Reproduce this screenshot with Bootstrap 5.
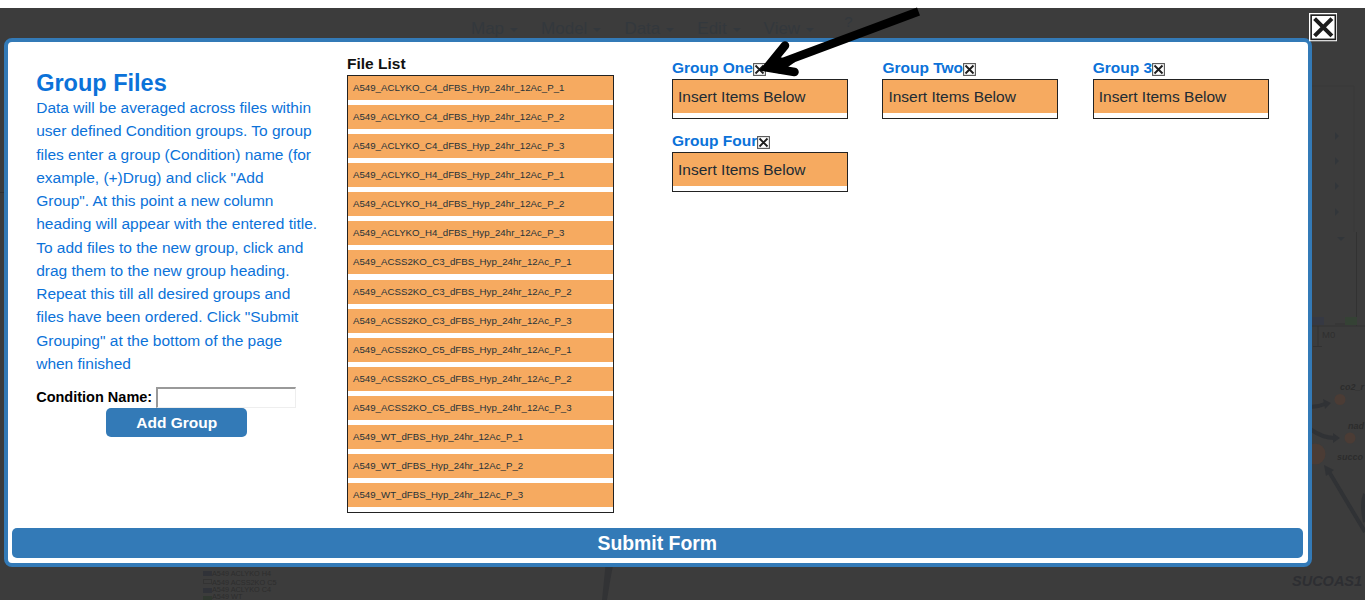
<!DOCTYPE html>
<html lang="en">
<head>
<meta charset="utf-8">
<title>Group Files</title>
<meta name="viewport" content="width=device-width, initial-scale=1">
<link href="https://cdn.jsdelivr.net/npm/bootstrap@5.3.0/dist/css/bootstrap.min.css" rel="stylesheet">
<style>
body{font-family:"Liberation Sans",Arial,sans-serif;font-size:15.5px;line-height:23.27px;background:#fff;color:#212529;padding-top:8px;height:600px;overflow:hidden}
.backdrop-page{width:1365px;height:592px;background:#3c3c3c}
.map-bg{left:0;top:-8px;width:1365px;height:600px}
.top-menu{height:30px;padding-left:471px;font-size:17px;line-height:20px;color:#33383d}
.top-menu span.item{margin-right:23px;margin-top:11px;height:19px;display:flex;align-items:center}
.top-menu .item::after{content:"";border:4px solid transparent;border-top-color:#33383d;border-bottom:0;margin-left:6px;margin-top:3px}
.top-menu .help{font-size:15px;line-height:28px;margin-left:7px}
.dialog-box{margin-left:3.5px;width:1308.5px;height:529px;border:4px solid #337ab7;border-radius:8px;background:#fff}
.dialog-body{height:486px}
.intro{width:339.5px;padding:29px 0 0 28.7px;color:#0b72d9}
.intro h1{font-size:23.5px;line-height:25px;font-weight:700;margin:0}
.intro p{margin:0;white-space:nowrap}
.cond{margin-top:10.5px;color:#000;font-size:14.5px;font-weight:700;height:22.5px}
.cond input{width:140px;height:21px;border:1px solid #eee;border-top:2px solid #999;border-left:2px solid #999;border-radius:0;margin:1px 0 0 4px;padding:0;background:#fff}
.blue-btn{background:#337ab7;color:#fff;font-weight:700;border:0;border-radius:5px;padding:0}
.add-btn{width:141px;height:28.5px;margin-left:70px;font-size:15.5px;line-height:29px}
.files{width:267px;padding-top:10px}
.files h2,.group-name{font-size:15.5px;line-height:23px;font-weight:700;margin:0}
.files h2{color:#111}
.drop-box{border:1px solid #222;background:#fff}
.file-item{height:24px;margin-bottom:5.09px;padding-left:5px;background:#f6aa60;font-size:9.7px;line-height:24px;color:#263238}
.files .drop-box{height:438px}
.groups{margin-left:58px;padding-top:14.4px;width:634px;align-content:flex-start}
.group-col{width:210.4px;height:72.7px}
.group-name{color:#0b72d9;height:23px}
.group-name svg{margin-top:3px}
.group-col .drop-box{width:176px;height:40px}
.insert-item{height:33px;padding-left:5px;background:#f6aa60;line-height:33px;color:#212b33}
.submit-btn{width:1291.5px;height:30px;margin-left:4px;font-size:19.4px;line-height:30px}
.close-x{left:1308.5px;top:5px}
.pointer{left:750px;top:-8px}
</style>
</head>
<body>
<svg class="d-none"><symbol id="xbox" viewBox="0 0 28 28"><rect width="28" height="28" fill="#fff"/><rect x="2.1" y="2.1" width="23.8" height="23.8" fill="#fff" stroke="#1d1d1d" stroke-width="1.6"/><path d="M5.500 5.500 22.500 22.500M22.500 5.500 5.500 22.500" stroke="#1d1d1d" stroke-width="4"/></symbol>
<symbol id="xsmall" viewBox="0 0 13 13"><rect x=".6" y=".6" width="11.8" height="11.8" fill="#fff" stroke="#555" stroke-width="1.1"/><path d="M2.500 2.500 10.500 10.500M10.500 2.500 2.500 10.500" stroke="#1d1d1d" stroke-width="1.9"/></symbol></svg>
<div class="backdrop-page position-relative">
<svg class="map-bg position-absolute" viewBox="0 0 1365 600" font-family="Liberation Sans">
<g fill="#32363a"><path d="M1335 132l4 4-4 4zM1335 157l4 4-4 4zM1335 182l4 4-4 4zM1335 208l4 4-4 4zM1337 237h8l-4 4z"/></g>
<path d="M1312 86h42v146" fill="none" stroke="#393939"/>
<path d="M1356.500 232v94M1312 326h53M1318 326v20M1313 346.500h9M1335 324h10" fill="none" stroke="#323232"/>
<rect x="1312" y="317" width="12" height="8" fill="#363943"/><rect x="1345" y="317" width="12" height="8" fill="#354235"/>
<text x="1322" y="338" font-size="9.500" fill="#2f2f2f">M0</text>
<g fill="#4b3c35"><circle cx="1340" cy="399.500" r="5.500"/><circle cx="1350" cy="438" r="5.500"/><circle cx="1315" cy="454" r="10.500"/></g>
<g fill="none" stroke="#303235" stroke-width="4"><path d="M1310 407q8 0 15-3M1310 429q13 9 24 9M1328 470 1365 532"/><path d="M1365 494q-4 10 0 28"/></g>
<path d="M1323 399l8 4-6 6zM1333 433l7 5-7 5zM1324 465l10 5-8 6z" fill="#303235"/>
<path d="M606 560h8q-4 20-7 40h-5z" fill="#323335"/>
<g fill="#2c2c2c" font-weight="700" font-style="italic" font-size="9"><text x="1340" y="390">co2_r</text><text x="1348" y="429">nad</text><text x="1337" y="460">succo</text></g>
<text x="1292" y="586" font-size="14.500" font-weight="700" font-style="italic" fill="#2d2e32">SUCOAS1</text>
<g font-size="7.300" fill="#2d2d2d"><text x="212" y="576">A549 ACLYKO H4</text><text x="212" y="584.500">A549 ACSS2KO C5</text><text x="212" y="592">A549 ACLYKO C4</text><text x="212" y="599">A549 WT</text></g>
<g fill="#303238"><rect x="203" y="571" width="9" height="5"/><rect x="203" y="588" width="9" height="5"/><rect x="203" y="596" width="9" height="4" fill="#303830"/></g><rect x="203.500" y="579.500" width="8" height="4" fill="none" stroke="#333"/>
<path d="M0 192.500h4" stroke="#303030"/>
</svg>
<nav class="top-menu d-flex">
<span class="item">Map</span><span class="item">Model</span><span class="item">Data</span><span class="item">Edit</span><span class="item">View</span><span class="help">?</span>
</nav>
<main class="dialog-box position-relative">
<div class="dialog-body d-flex">
<section class="intro flex-shrink-0">
<h1>Group Files</h1>
<p>Data will be averaged across files within<br>user defined Condition groups. To group<br>files enter a group (Condition) name (for<br>example, (+)Drug) and click "Add<br>Group". At this point a new column<br>heading will appear with the entered title.<br>To add files to the new group, click and<br>drag them to the new group heading.<br>Repeat this till all desired groups and<br>files have been ordered. Click "Submit<br>Grouping" at the bottom of the page<br>when finished</p>
<div class="cond d-flex"><label for="cname">Condition Name:</label><input id="cname" type="text"></div>
<button class="blue-btn add-btn d-block">Add Group</button>
</section>
<section class="files flex-shrink-0">
<h2>File List</h2>
<div class="drop-box">
<div class="file-item">A549_ACLYKO_C4_dFBS_Hyp_24hr_12Ac_P_1</div>
<div class="file-item">A549_ACLYKO_C4_dFBS_Hyp_24hr_12Ac_P_2</div>
<div class="file-item">A549_ACLYKO_C4_dFBS_Hyp_24hr_12Ac_P_3</div>
<div class="file-item">A549_ACLYKO_H4_dFBS_Hyp_24hr_12Ac_P_1</div>
<div class="file-item">A549_ACLYKO_H4_dFBS_Hyp_24hr_12Ac_P_2</div>
<div class="file-item">A549_ACLYKO_H4_dFBS_Hyp_24hr_12Ac_P_3</div>
<div class="file-item">A549_ACSS2KO_C3_dFBS_Hyp_24hr_12Ac_P_1</div>
<div class="file-item">A549_ACSS2KO_C3_dFBS_Hyp_24hr_12Ac_P_2</div>
<div class="file-item">A549_ACSS2KO_C3_dFBS_Hyp_24hr_12Ac_P_3</div>
<div class="file-item">A549_ACSS2KO_C5_dFBS_Hyp_24hr_12Ac_P_1</div>
<div class="file-item">A549_ACSS2KO_C5_dFBS_Hyp_24hr_12Ac_P_2</div>
<div class="file-item">A549_ACSS2KO_C5_dFBS_Hyp_24hr_12Ac_P_3</div>
<div class="file-item">A549_WT_dFBS_Hyp_24hr_12Ac_P_1</div>
<div class="file-item">A549_WT_dFBS_Hyp_24hr_12Ac_P_2</div>
<div class="file-item">A549_WT_dFBS_Hyp_24hr_12Ac_P_3</div>
</div>
</section>
<section class="groups d-flex flex-wrap flex-shrink-0">
<div class="group-col"><div class="group-name d-flex align-items-center">Group One<svg width="13" height="13"><use href="#xsmall"/></svg></div><div class="drop-box"><div class="insert-item">Insert Items Below</div></div></div>
<div class="group-col"><div class="group-name d-flex align-items-center">Group Two<svg width="13" height="13"><use href="#xsmall"/></svg></div><div class="drop-box"><div class="insert-item">Insert Items Below</div></div></div>
<div class="group-col"><div class="group-name d-flex align-items-center">Group 3<svg width="13" height="13"><use href="#xsmall"/></svg></div><div class="drop-box"><div class="insert-item">Insert Items Below</div></div></div>
<div class="group-col"><div class="group-name d-flex align-items-center">Group Four<svg width="13" height="13"><use href="#xsmall"/></svg></div><div class="drop-box"><div class="insert-item">Insert Items Below</div></div></div>
</section>
</div>
<button class="blue-btn submit-btn d-block">Submit Form</button>
</main>
<svg class="close-x position-absolute" width="28.500" height="28.500"><use href="#xbox"/></svg>
<svg class="pointer position-absolute" width="180" height="90" viewBox="750 0 180 90" fill="none" stroke="#000"><path d="M785 45.500 767 67.500 794.500 72" stroke-width="8.500" stroke-linecap="round"/><path d="M918.500 11.500 775 65" stroke-width="8.500"/><path d="M761 69.500 776 52 780 57 795 62 788 67 782 74z" fill="#000" stroke="none"/></svg>
</div>
<script src="https://cdn.jsdelivr.net/npm/bootstrap@5.3.0/dist/js/bootstrap.bundle.min.js"></script>
</body>
</html>
